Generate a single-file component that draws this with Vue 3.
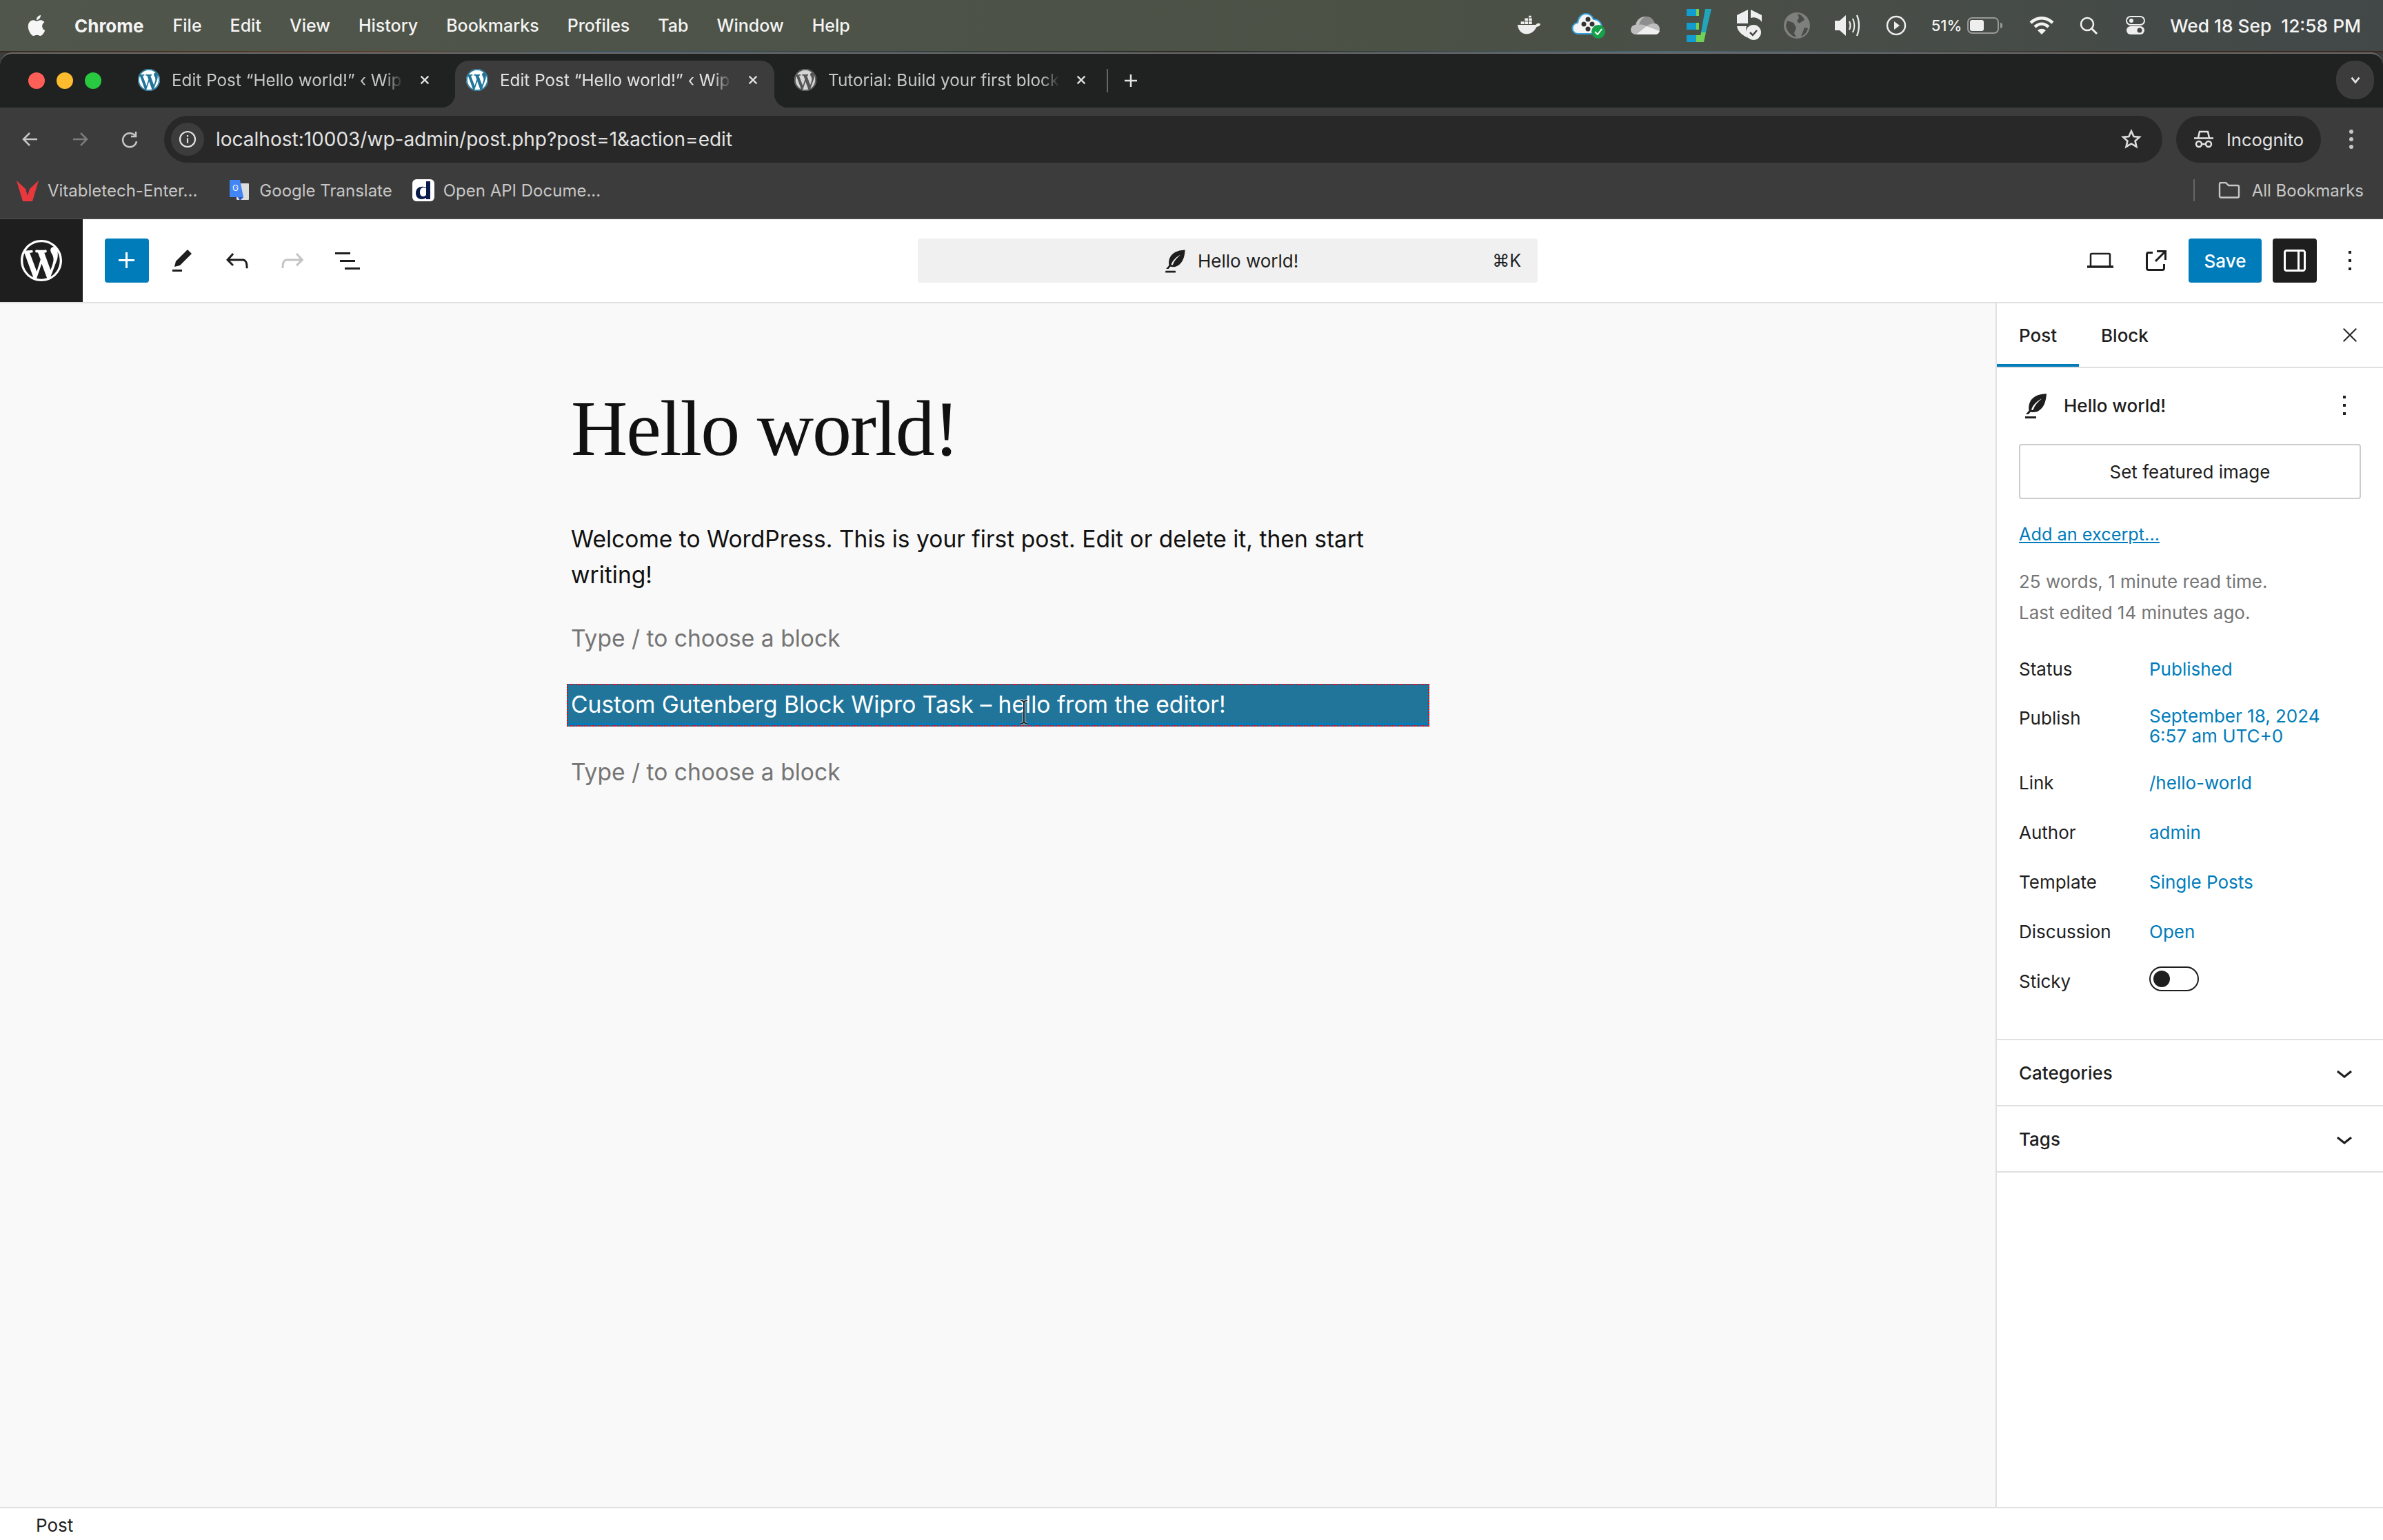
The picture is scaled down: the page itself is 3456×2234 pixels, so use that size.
<script setup>
const menus = ['File', 'Edit', 'View', 'History', 'Bookmarks', 'Profiles', 'Tab', 'Window', 'Help']
const tabs = [
  { title: 'Edit Post “Hello world!” ‹ Wip', active: false, tone: 'blue' },
  { title: 'Edit Post “Hello world!” ‹ Wip', active: true, tone: 'blue' },
  { title: 'Tutorial: Build your first block', active: false, tone: 'grey' }
]
const rows = [
  { label: 'Link', value: '/hello-world' },
  { label: 'Author', value: 'admin' },
  { label: 'Template', value: 'Single Posts' },
  { label: 'Discussion', value: 'Open' }
]
const wpLogo = 'M20 10c0-5.51-4.49-10-10-10C4.48 0 0 4.49 0 10c0 5.52 4.48 10 10 10 5.51 0 10-4.48 10-10zM7.78 15.37L4.37 6.22c.55-.02 1.17-.08 1.17-.08.5-.06.44-1.13-.06-1.11 0 0-1.45.11-2.37.11-.18 0-.37 0-.58-.01C4.12 2.69 6.87 1.11 10 1.11c2.33 0 4.45.87 6.05 2.34-.68-.11-1.65.39-1.65 1.58 0 .74.45 1.36.9 2.1.35.61.55 1.36.55 2.46 0 1.49-1.4 5-1.4 5l-3.03-8.37c.54-.02.82-.17.82-.17.5-.05.44-1.25-.06-1.22 0 0-1.44.12-2.38.12-.87 0-2.33-.12-2.33-.12-.5-.03-.56 1.2-.06 1.22l.92.08 1.26 3.41zM17.41 10c.24-.64.74-1.87.43-4.25.7 1.29 1.05 2.71 1.05 4.25 0 3.29-1.73 6.24-4.4 7.78.97-2.59 1.94-5.2 2.92-7.78zM6.1 18.09C3.12 16.65 1.11 13.53 1.11 10c0-1.3.23-2.48.72-3.59C3.25 10.3 4.67 14.2 6.1 18.09zm4.03-6.63l2.58 6.98c-.86.29-1.76.45-2.71.45-.79 0-1.57-.11-2.29-.33.81-2.38 1.62-4.74 2.42-7.1z'
const feather = 'M20 3.5c-6.5.3-10.6 2.6-12.2 6.6-.8 2-.8 4-.5 5.7L5 18.5h1.9l1.5-1.7c2 .5 4.300.3 6.200-1C18.300 13.300 19.700 8.800 20 3.500zM9 15.300c.9-3 3.500-6 7.500-8-3 2.400-5.200 5-6.300 8.200-.4 0-.8-.1-1.200-.2zM4.500 20h8v1.500h-8z'
</script>

<template>
  <div class="screen">
    <header class="menubar">
      <svg class="apple" viewBox="0 0 24 24"><path d="M12.152 6.896c-.948 0-2.415-1.078-3.96-1.04-2.04.027-3.91 1.183-4.961 3.014-2.117 3.675-.546 9.103 1.519 12.09 1.013 1.454 2.208 3.09 3.792 3.039 1.52-.065 2.09-.987 3.935-.987 1.831 0 2.35.987 3.96.948 1.637-.026 2.676-1.48 3.676-2.948 1.156-1.688 1.636-3.325 1.662-3.415-.039-.013-3.182-1.221-3.22-4.857-.026-3.04 2.48-4.494 2.597-4.559-1.429-2.09-3.623-2.324-4.39-2.376-2-.156-3.675 1.09-4.61 1.09zM15.53 3.83c.843-1.012 1.4-2.427 1.245-3.83-1.207.052-2.662.805-3.532 1.818-.78.896-1.454 2.338-1.273 3.714 1.338.104 2.715-.688 3.559-1.701" /></svg>
      <span class="app-name">Chrome</span>
      <span v-for="m in menus" :key="m" class="menu-item">{{ m }}</span>
      <div class="status-icons">
        <svg class="s-docker" width="38" height="30" viewBox="0 0 40 30"><path fill="#eee" d="M3 14h28c2-3 5-3 7-1-1 3-3 4-6 4-3 7-9 11-16 11C9 28 4 22 3 14z" /><path fill="#eee" d="M8 9h5v4H8zm6 0h5v4h-5zm6 0h5v4h-5zM14 4h5v4h-5zm6 0h5v4h-5zM20 0h4v3h-4z" /></svg>
        <svg class="s-cloud" width="50" height="40" viewBox="0 0 50 40"><path fill="#f4f4f4" stroke="#35a0dc" stroke-width="2" d="M10 32a8 8 0 0 1-1-16C10 8 15 3 21 3c5 0 9 3 11 8 7 0 12 5 12 12 0 5-4 9-8 9z" /><g fill="#333"><circle cx="24" cy="11" r="3.500" /><circle cx="18" cy="18" r="3.500" /><circle cx="30" cy="18" r="3.500" /><circle cx="24" cy="25" r="3.500" /></g><circle cx="39" cy="29" r="10" fill="#14a14a" /><path d="M34 29l4 4 6-8" fill="none" stroke="#fff" stroke-width="2" /></svg>
        <svg class="s-drive" width="42" height="28" viewBox="0 0 42 28"><path fill="#bdbdbd" d="M7 27a7 7 0 0 1 0-14c2-8 8-12 14-12s11 4 13 10c5 0 8 4 8 8s-3 8-7 8z" /><path fill="#8e8e8e" d="M12 13c2-8 7-12 11-12 6 0 10 4 12 10-6 0-9 2-12 4-3-2-7-3-11-2z" /><path fill="#efefef" d="M8 27l15-12 19 7c-1 3-3 5-7 5z" /></svg>
        <svg class="s-e" width="36" height="48" viewBox="0 0 36 48"><path fill="#129ccf" d="M0 0h14v10H0zM0 20h14v10H0zM0 38h14v10H0z" /><path fill="#78d24f" d="M14 0h4v10h-4zM14 20h4v10h-4zM14 38h8v10h-8z" /><path fill="#22a5b8" d="M27 0h9l-8 34h-7z" /><path fill="#6fd05c" d="M21 34h7l-3 14h-6z" /></svg>
        <svg class="s-shield" width="36" height="46" viewBox="0 0 36 46"><path fill="#efefef" d="M16 0v20H0V8zm4 0l16 8v10a14 14 0 0 0-16-6zM0 24h14c-2 6-1 12 2 17C8 37 1 32 0 24z" /><circle cx="24" cy="33" r="11" fill="#efefef" /><path d="M19 33l4 4 6-7" fill="none" stroke="#444" stroke-width="2.500" /></svg>
        <svg class="s-globe" width="38" height="38" viewBox="0 0 38 38"><circle cx="19" cy="19" r="19" fill="#7d807c" /><path fill="#4a4d47" d="M20 2c5 1 9 5 10 9l-8 5-3-4 3-4zM5 12l9 3 4 7-3 8 3 6C10 34 4 27 3 19zM30 22l5 1c-1 5-5 10-10 12z" /></svg>
        <svg class="s-sound" width="42" height="38" viewBox="0 0 42 38"><path fill="#eee" d="M1 12h7L17 4v30l-9-8H1z" /><path d="M22 13c2 4 2 8 0 12M27 9c3 6 3 14 0 20M33 4c4 9 4 21 0 30" fill="none" stroke="#eee" stroke-width="2.200" /></svg>
        <svg class="s-play" width="30" height="30" viewBox="0 0 30 30"><circle cx="15" cy="15" r="13" fill="none" stroke="#eee" stroke-width="2.500" /><path d="M12 9l8 6-8 6z" fill="#eee" /></svg>
        <span class="battery-pct">51%</span>
        <span class="battery"><span class="battery-fill"></span></span>
        <svg width="36" height="28" viewBox="0 0 36 28"><path d="M2 10c10-9 22-9 32 0M8 16c7-6 13-6 20 0" fill="none" stroke="#f2f2f2" stroke-width="4.500" /><path d="M12 21c4-3 8-3 12 0l-6 6z" fill="#f2f2f2" /></svg>
        <svg class="s-search" width="28" height="28" viewBox="0 0 28 28"><circle cx="12" cy="12" r="9" fill="none" stroke="#f2f2f2" stroke-width="2.500" /><path d="M18 18l8 8" stroke="#f2f2f2" stroke-width="3" /></svg>
        <svg width="28" height="28" viewBox="0 0 28 28"><rect x="1" y="1" width="26" height="12" rx="6" fill="none" stroke="#eee" stroke-width="2" /><circle cx="8" cy="7" r="3" fill="#eee" /><rect x="1" y="15" width="26" height="12" rx="6" fill="#eee" /><circle cx="20" cy="21" r="3.500" fill="#444" /></svg>
        <span class="clock">Wed 18 Sep&nbsp; 12:58 PM</span>
      </div>
    </header>
    <div class="wallpaper-strip"></div>

    <section class="browser">
      <div class="tabstrip">
        <div class="lights"><i class="red"></i><i class="amber"></i><i class="green"></i></div>
        <div v-for="(t, i) in tabs" :key="i" class="tab" :class="{ active: t.active }">
          <span class="favicon" :class="t.tone">
            <svg viewBox="0 0 20 20"><path :d="wpLogo" /></svg>
          </span>
          <span class="tab-title">{{ t.title }}</span>
          <svg class="tab-close" viewBox="0 0 20 20"><path d="M4 4l12 12M16 4L4 16" /></svg>
        </div>
        <span class="tab-sep"></span>
        <svg class="tab-new" viewBox="0 0 24 24"><path d="M12 3v18M3 12h18" /></svg>
        <span class="tab-list"><svg viewBox="0 0 20 20"><path d="M5 7l5 6 5-6" /></svg></span>
      </div>

      <div class="toolbar">
        <svg class="nav back" viewBox="0 0 28 28"><path d="M24 14H5M13 5l-9 9 9 9" /></svg>
        <svg class="nav fwd" viewBox="0 0 28 28"><path d="M4 14h19M15 5l9 9-9 9" /></svg>
        <svg class="nav reload" viewBox="0 0 28 28"><path d="M22 9a10 10 0 1 0 2 8M23 3v7h-7" /></svg>
        <div class="omnibox">
          <span class="site-info"><svg viewBox="0 0 28 28"><circle cx="14" cy="14" r="11" /><path d="M14 12.500v7M14 8v2.500" /></svg></span>
          <span class="url">localhost:10003/wp-admin/post.php?post=1&amp;action=edit</span>
          <svg class="star" viewBox="0 0 28 28"><path d="M14 3l3.300 7.300 7.700.8-5.800 5.200 1.700 7.700L14 20l-6.900 4 1.700-7.700L3 11.100l7.700-.8z" /></svg>
        </div>
        <div class="incognito">
          <svg viewBox="0 0 30 26"><path d="M1 11.500h28M7 11l2-9h12l2 9" fill="none" /><circle cx="8" cy="20" r="4" fill="none" /><circle cx="22" cy="20" r="4" fill="none" /><path d="M12 20h6" /></svg>
          <span>Incognito</span>
        </div>
        <svg class="chrome-kebab" viewBox="0 0 8 32"><circle cx="4" cy="5" r="3" /><circle cx="4" cy="16" r="3" /><circle cx="4" cy="27" r="3" /></svg>
      </div>

      <div class="bookmarks">
        <svg class="bm-icon" viewBox="0 0 32 32"><path fill="#e8383d" d="M0 2l13 12 3 10 3-10L32 2l-9 30h-14z" /></svg>
        <span class="bm first">Vitabletech-Enter...</span>
        <svg class="bm-icon translate" viewBox="0 0 32 32"><rect x="12" y="6" width="18" height="24" rx="1" fill="#ddd" /><path fill="#4285f4" d="M2 1h15l5 25H2z" /><path fill="#2a56c6" d="M14 26h8l-5 5z" /><text x="6" y="17" font-size="12" font-family="Inter, sans-serif" fill="#fff">G</text></svg>
        <span class="bm">Google Translate</span>
        <svg class="bm-icon" viewBox="0 0 32 32"><rect width="32" height="32" rx="6" fill="#fff" /><path fill="#0a1a4a" d="M20 3h6v26h-6v-2c-6 4-15 2-15-7 0-8 8-11 15-8zm0 10c-4-2-9-1-9 6s6 7 9 4z" /></svg>
        <span class="bm">Open API Docume...</span>
        <span class="bm-sep"></span>
        <svg class="bm-folder" viewBox="0 0 32 24"><path d="M2 20.500V3a2 2 0 0 1 2-2h7l4 4h13a2 2 0 0 1 2 2v13.500a2 2 0 0 1-2 2H4a2 2 0 0 1-2-2z" /></svg>
        <span class="bm all">All Bookmarks</span>
      </div>
    </section>

    <section class="wp-header">
      <div class="wp-logo"><svg viewBox="0 0 20 20"><path :d="wpLogo" /></svg></div>
      <button class="btn-add"><svg viewBox="0 0 24 24"><path d="M11 12.500V17.500H12.500V12.500H17.500V11H12.500V6H11V11H6V12.500H11Z" /></svg></button>
      <span class="tool"><svg viewBox="0 0 24 24"><path d="m19 7-3-3-8.500 8.500-1 4 4-1L19 7Zm-7 11.500H5V20h7v-1.500Z" /></svg></span>
      <span class="tool"><svg viewBox="0 0 24 24"><path d="M18.300 11.700c-.6-.6-1.400-.9-2.300-.9H6.700l2.900-3.300-1.100-1-4.500 5L8.500 16l1-1-2.700-2.700H16c.5 0 .9.200 1.300.5 1 1 1 3.400 1 4.500v.3h1.500v-.2c0-1.500 0-4.300-1.500-5.700z" /></svg></span>
      <span class="tool off"><svg viewBox="0 0 24 24"><path d="M15.600 6.500l-1.100 1 2.900 3.300H8c-.9 0-1.700.3-2.300.9-1.400 1.500-1.400 4.200-1.400 5.600v.2h1.500v-.3c0-1.100 0-3.500 1-4.500.3-.3.7-.5 1.300-.5h9.200L14.500 15l1.100 1.100 4.600-4.600-4.600-5z" /></svg></span>
      <span class="tool"><svg viewBox="0 0 24 24"><path d="M3 6h11v1.500H3V6Zm3.500 5.500h11V13h-11v-1.500ZM21 17H10v1.500h11V17Z" /></svg></span>

      <div class="command-bar">
        <svg viewBox="0 0 24 24"><path :d="feather" /></svg>
        <span class="command-title">Hello world!</span>
        <span class="command-key">⌘K</span>
      </div>

      <span class="tool preview"><svg class="laptop" viewBox="0 0 40 24"><path d="M6 20V3.500A1.500 1.500 0 0 1 7.500 2h25A1.500 1.500 0 0 1 34 3.500V20" /><path d="M1 21h38" class="laptop-base" /></svg></span>
      <span class="tool external"><svg viewBox="0 0 24 24"><path d="M19.500 4.500h-7V6h4.440l-5.970 5.970 1.060 1.060L18 7.060v4.440h1.500v-7Zm-13 1a2 2 0 0 0-2 2v10a2 2 0 0 0 2 2h10a2 2 0 0 0 2-2v-3H17v3a.5.5 0 0 1-.5.5h-10a.5.5 0 0 1-.5-.5v-10a.5.5 0 0 1 .5-.5h3V5.500h-3Z" /></svg></span>
      <button class="btn-save">Save</button>
      <button class="btn-panel"><svg viewBox="0 0 24 24"><path d="M18 4H6c-1.100 0-2 .9-2 2v12c0 1.100.9 2 2 2h12c1.100 0 2-.9 2-2V6c0-1.100-.9-2-2-2zm-4 14.500H6c-.3 0-.5-.2-.5-.5V6c0-.3.200-.5.500-.5h8v13zm4.500-.5c0 .3-.2.5-.5.500h-2.500v-13H18c.3 0 .5.200.5.500v12z" /></svg></button>
      <span class="tool kebab"><svg viewBox="0 0 24 24"><path d="M13 19h-2v-2h2v2zm0-6h-2v-2h2v2zm0-6h-2V5h2v2z" /></svg></span>
    </section>

    <section class="wp-body">
      <main class="canvas">
        <h1 class="post-title">Hello world!</h1>
        <p class="para">Welcome to WordPress. This is your first post. Edit or delete it, then start writing!</p>
        <p class="placeholder first">Type / to choose a block</p>
        <div class="custom-block">
          Custom Gutenberg Block Wipro Task – hello from the editor!
          <svg class="ibeam" viewBox="0 0 18 38"><path class="halo" d="M4 2c3 0 4 1 5 3 1-2 2-3 5-3M9 5v28M4 36c3 0 4-1 5-3 1 2 2 3 5 3" /><path d="M4 2c3 0 4 1 5 3 1-2 2-3 5-3M9 5v28M4 36c3 0 4-1 5-3 1 2 2 3 5 3" /></svg>
        </div>
        <p class="placeholder">Type / to choose a block</p>
      </main>

      <aside class="sidebar">
        <div class="side-tabs">
          <span class="side-tab current">Post</span>
          <span class="side-tab">Block</span>
          <svg class="side-close" viewBox="0 0 24 24"><path d="m13.060 12 6.470-6.470-1.060-1.060L12 10.940 5.530 4.470 4.470 5.530 10.940 12l-6.470 6.470 1.060 1.060L12 13.060l6.470 6.470 1.060-1.060L13.060 12Z" /></svg>
        </div>
        <div class="side-main">
          <div class="post-card">
            <svg class="post-icon" viewBox="0 0 24 24"><path :d="feather" /></svg>
            <span>Hello world!</span>
            <svg class="post-more" viewBox="0 0 24 24"><path d="M13 19h-2v-2h2v2zm0-6h-2v-2h2v2zm0-6h-2V5h2v2z" /></svg>
          </div>
          <button class="featured">Set featured image</button>
          <a class="excerpt">Add an excerpt...</a>
          <p class="meta">25 words, 1 minute read time.<br />Last edited 14 minutes ago.</p>
          <div class="rows">
            <div class="row"><span class="row-label">Status</span><a class="row-value">Published</a></div>
            <div class="row publish"><span class="row-label">Publish</span><a class="row-value">September 18, 2024<br />6:57 am UTC+0</a></div>
            <div v-for="r in rows" :key="r.label" class="row"><span class="row-label">{{ r.label }}</span><a class="row-value">{{ r.value }}</a></div>
            <div class="row"><span class="row-label">Sticky</span><span class="toggle"><i></i></span></div>
          </div>
        </div>
        <div class="panel first">
          <span>Categories</span>
          <svg viewBox="0 0 24 24"><path d="M17.500 11.600L12 16l-5.500-4.400.9-1.200L12 14l4.500-3.600 1 1.200z" /></svg>
        </div>
        <div class="panel">
          <span>Tags</span>
          <svg viewBox="0 0 24 24"><path d="M17.500 11.600L12 16l-5.500-4.400.9-1.200L12 14l4.500-3.600 1 1.200z" /></svg>
        </div>
      </aside>
    </section>

    <footer class="wp-status"><span>Post</span></footer>
  </div>
</template>

<style>
html, body { margin: 0; background: #fff; }
</style>

<style scoped>
.screen {
  width: 3456px;
  height: 2234px;
  display: flex;
  flex-direction: column;
  overflow: hidden;
  font-family: Inter, "Liberation Sans", sans-serif;
  color: #1e1e1e;
  background: #fff;
}

/* mac menu bar */
.menubar {
  height: 74px;
  flex: none;
  display: flex;
  align-items: center;
  padding: 0 32px 0 38px;
  background: linear-gradient(90deg, #50564b 0%, #4c5146 60%, #424848 100%);
  color: #f4f4f4;
  font-size: 25px;
  font-weight: 500;
}
.apple { width: 30px; height: 36px; fill: #f6f6f6; margin-right: 40px; }
.app-name { font-size: 26px; font-weight: 700; margin-right: 42px; }
.menu-item { margin-right: 41px; }
.status-icons { margin-left: auto; display: flex; align-items: center; gap: 36px; }
.s-docker { margin-right: 7px; }
.s-drive { margin-right: 3px; }
.s-e { margin-right: 1px; }
.s-shield { margin-right: -4px; }
.s-globe { margin-right: -1px; }
.s-sound { margin-right: -3px; }
.s-search { margin-right: 4px; }
.battery-pct { font-size: 22px; margin-right: -28px; }
.battery { width: 46px; height: 24px; margin-right: 8px; border: 2px solid #999; border-radius: 7px; padding: 2px; box-sizing: border-box; display: flex; position: relative; }
.battery::after { content: ""; position: absolute; right: -7px; top: 6px; width: 3px; height: 8px; border-radius: 0 3px 3px 0; background: #999; }
.battery-fill { width: 20px; background: #eee; border-radius: 3px; }
.clock { font-size: 26.300px; white-space: nowrap; }
.wallpaper-strip {
  height: 2px;
  flex: none;
  background: linear-gradient(90deg, #332a20, #5a3f2a 15%, #3f5866 25%, #2b2b26 50%, #4a6878 70%, #3a2a20 90%);
}

/* chrome */
.browser { flex: none; height: 242px; background: #3c3c3c; display: flex; flex-direction: column; }
.tabstrip {
  height: 80px;
  flex: none;
  box-sizing: border-box;
  padding-top: 10px;
  display: flex;
  background: #202222;
  border-top: 2px solid #6a6a6a;
  border-radius: 18px 18px 0 0;
}
.lights { width: 184px; flex: none; display: flex; gap: 17px; padding: 17px 0 0 41px; box-sizing: border-box; }
.lights i { width: 24px; height: 24px; border-radius: 50%; }
.red { background: #ff5f57; }
.amber { background: #febc2e; }
.green { background: #28c840; }
.tab {
  width: 463px;
  height: 68px;
  margin-right: 13px;
  flex: none;
  box-sizing: border-box;
  padding: 0 0 12px 18px;
  display: flex;
  align-items: center;
  gap: 19px;
  position: relative;
  color: #c7c7c7;
  font-size: 24.300px;
  border-radius: 20px 20px 0 0;
}
.tab.active { background: #3c3c3c; color: #e3e3e3; }
.tab.active::before,
.tab.active::after {
  content: "";
  position: absolute;
  bottom: 0;
  width: 20px;
  height: 20px;
}
.tab.active::before { left: -20px; background: radial-gradient(circle at 0 0, transparent 20px, #3c3c3c 20.5px); }
.tab.active::after { right: -20px; background: radial-gradient(circle at 100% 0, transparent 20px, #3c3c3c 20.5px); }
.favicon { width: 32px; height: 32px; margin: 0 -2px; border-radius: 50%; background: #fff; flex: none; display: flex; }
.favicon svg { width: 32px; height: 32px; }
.favicon.blue svg { fill: #21759b; }
.favicon.grey svg { fill: #555; }
.favicon.grey { background: #d5d5d5; }
.tab-title {
  width: 336px;
  flex: none;
  white-space: nowrap;
  -webkit-mask-image: linear-gradient(90deg, #000 92%, transparent);
  mask-image: linear-gradient(90deg, #000 92%, transparent);
}
.tab-close { width: 18px; height: 18px; margin-left: 3px; flex: none; fill: none; stroke: #e3e3e3; stroke-width: 2.500; }
.tab-sep { width: 2px; height: 34px; margin: 12px 0 0 -7px; background: #666; flex: none; }
.tab-new { width: 24px; height: 24px; margin: 17px 0 0 21px; flex: none; fill: none; stroke: #e3e3e3; stroke-width: 2.500; }
.tab-list {
  width: 55px;
  height: 56px;
  margin-left: auto;
  margin-right: 13px;
  border-radius: 26px;
  background: #3c3c3c;
  display: flex;
  align-items: center;
  justify-content: center;
  flex: none;
}
.tab-list svg { width: 22px; height: 22px; fill: none; stroke: #e3e3e3; stroke-width: 2.500; }

.toolbar { height: 92px; flex: none; box-sizing: border-box; padding: 12px 0 12px 30px; display: flex; align-items: center; }
.nav { width: 28px; height: 28px; flex: none; fill: none; stroke: #c7c7c7; stroke-width: 2.500; margin-right: 44px; }
.nav.fwd { stroke: #7c7c7c; }
.nav.reload { margin-right: 36px; }
.omnibox {
  width: 2898px;
  height: 68px;
  flex: none;
  box-sizing: border-box;
  padding: 0 30px 0 10px;
  display: flex;
  align-items: center;
  border-radius: 34px;
  background: #282828;
  color: #e3e3e3;
  font-size: 28px;
}
.site-info { width: 48px; height: 48px; border-radius: 50%; background: #3c3c3c; display: flex; align-items: center; justify-content: center; margin-right: 17px; }
.site-info svg { width: 28px; height: 28px; fill: none; stroke: #e3e3e3; stroke-width: 2.200; }
.star { width: 30px; height: 30px; margin-left: auto; fill: none; stroke: #dcdcdc; stroke-width: 2.500; }
.incognito {
  width: 210px;
  height: 68px;
  margin-left: 20px;
  flex: none;
  box-sizing: border-box;
  padding-left: 25px;
  display: flex;
  align-items: center;
  gap: 18px;
  border-radius: 34px;
  background: #282828;
  color: #e3e3e3;
  font-size: 25.500px;
}
.incognito svg { width: 30px; height: 26px; stroke: #e3e3e3; stroke-width: 2.500; }
.chrome-kebab { width: 8px; height: 32px; margin-left: 40px; flex: none; fill: #c7c7c7; }

.bookmarks { height: 70px; flex: none; box-sizing: border-box; padding: 0 28px 12px 24px; display: flex; align-items: center; color: #c7c7c7; font-size: 24px; border-bottom: 2px solid #474747; }
.bm-icon { width: 32px; height: 32px; flex: none; }
.bm { margin-left: 13px; margin-right: 29px; white-space: nowrap; }
.bm.first { margin-right: 45px; }
.bm-sep { width: 2px; height: 32px; margin-left: auto; background: #666; }
.bm-folder { width: 32px; height: 24px; margin-left: 34px; fill: none; stroke: #c7c7c7; stroke-width: 2.400; }
.bm.all { margin-right: 0; margin-left: 17px; }

/* wordpress header */
.wp-header {
  height: 122px;
  flex: none;
  box-sizing: border-box;
  display: flex;
  align-items: center;
  border-bottom: 2px solid #e0e0e0;
}
.wp-logo { width: 120px; height: 120px; background: #1e1e1e; display: flex; align-items: center; justify-content: center; flex: none; }
.wp-logo svg { width: 60px; height: 60px; fill: #fff; }
.btn-add {
  width: 64px;
  height: 64px;
  margin: 0 16px 0 32px;
  padding: 0;
  border: 0;
  border-radius: 4px;
  background: #007cba;
  display: flex;
  align-items: center;
  justify-content: center;
  flex: none;
}
.btn-add svg { width: 48px; height: 48px; fill: #fff; }
.tool { width: 64px; height: 64px; margin-right: 16px; flex: none; display: flex; align-items: center; justify-content: center; }
.tool svg { width: 48px; height: 48px; fill: #1e1e1e; }
.tool.off svg { fill: #c4c4c4; }
.tool svg.laptop { width: 40px; height: 24px; fill: none; stroke: #1e1e1e; stroke-width: 2.500; }
.laptop-base { stroke-width: 3.500; }
.command-bar {
  width: 899px;
  height: 64px;
  margin-left: 779px;
  flex: none;
  box-sizing: border-box;
  padding: 0 24px 0 351px;
  display: flex;
  align-items: center;
  border-radius: 4px;
  background: #f0f0f0;
  font-size: 26px;
}
.command-bar svg { width: 44px; height: 44px; margin-right: 11px; fill: #1e1e1e; }
.command-key { margin-left: auto; font-size: 25px; color: #1e1e1e; }
.tool.preview { margin-left: 784px; margin-right: 17px; }
.tool.external { margin-right: 15px; }
.btn-save {
  width: 106px;
  height: 64px;
  margin-right: 16px;
  padding: 0;
  border: 0;
  border-radius: 4px;
  background: #007cba;
  color: #fff;
  font: 500 26px Inter, sans-serif;
  flex: none;
}
.btn-panel {
  width: 64px;
  height: 64px;
  margin-right: 16px;
  padding: 0;
  border: 0;
  border-radius: 4px;
  background: #1e1e1e;
  display: flex;
  align-items: center;
  justify-content: center;
  flex: none;
}
.btn-panel svg { width: 48px; height: 48px; fill: #fff; }
.tool.kebab { margin-right: 0; }

/* editor */
.wp-body { flex: 1; min-height: 0; display: flex; }
.canvas { flex: 1; background: #f9f9f9; box-sizing: border-box; padding: 118px 0 0 828px; }
.post-title {
  margin: 0;
  height: 128px;
  font: 400 114px/128px "Liberation Serif", serif;
  letter-spacing: -2px;
  color: #111;
}
.para { width: 1200px; margin: 70px 0 0; font-size: 33.600px; line-height: 52px; color: #111; }
.placeholder { margin: 0; font-size: 33.600px; line-height: 52px; color: #757575; }
.placeholder.first { margin-top: 40px; }
.custom-block {
  width: 1251px;
  height: 62px;
  margin: 40px 0 40px -6px;
  box-sizing: border-box;
  padding-left: 4px;
  display: flex;
  align-items: center;
  position: relative;
  background: #21759b;
  border: 2px solid #007cba;
  border-bottom-width: 5px;
  outline: 2px dotted #f00;
  outline-offset: -2px;
  color: #fff;
  font-size: 33.600px;
  white-space: nowrap;
}
.ibeam { position: absolute; left: 652px; top: 20px; width: 18px; height: 38px; fill: none; stroke: #222; stroke-width: 2; }
.ibeam .halo { stroke: #fff; stroke-width: 4; opacity: .7; }

/* sidebar */
.sidebar { width: 562px; flex: none; box-sizing: border-box; border-left: 2px solid #e0e0e0; background: #fff; font-size: 26px; }
.side-tabs { height: 94px; box-sizing: border-box; border-bottom: 2px solid #e0e0e0; display: flex; align-items: center; position: relative; }
.side-tab { height: 92px; box-sizing: border-box; padding: 0 32px; display: flex; align-items: center; font-weight: 500; }
.side-tab.current { width: 119px; box-shadow: inset 0 -4px 0 #007cba; }
.side-close { width: 32px; height: 32px; margin-left: auto; margin-right: 32px; fill: #1e1e1e; }
.side-main { padding: 24px 32px 48px; }
.post-card { height: 60px; display: flex; align-items: center; font-weight: 500; }
.post-icon { width: 48px; height: 48px; margin-right: 17px; fill: #1e1e1e; }
.post-more { width: 48px; height: 48px; margin-left: auto; fill: #1e1e1e; }
.featured {
  width: 496px;
  height: 80px;
  margin-top: 26px;
  display: block;
  background: #fff;
  border: 2px solid #ccc;
  border-radius: 4px;
  color: #1e1e1e;
  font: 400 26px Inter, sans-serif;
}
.excerpt { display: block; margin-top: 31px; line-height: 40px; font-size: 25.300px; color: #007cba; text-decoration: underline; }
.meta { margin: 26px 0 0; line-height: 45px; color: #757575; }
.rows { margin-top: 23px; }
.row { height: 72px; display: flex; align-items: center; }
.row.publish { height: 93px; align-items: flex-start; line-height: 72px; }
.row.publish .row-value { margin-top: 18px; line-height: 29px; }
.row-label { width: 189px; flex: none; }
.row-value { color: #007cba; }
.toggle { width: 72px; height: 36px; margin-bottom: 6px; box-sizing: border-box; border: 2px solid #1e1e1e; border-radius: 18px; display: flex; align-items: center; padding-left: 4px; }
.toggle i { width: 24px; height: 24px; border-radius: 50%; background: #1e1e1e; }
.panel {
  height: 96px;
  box-sizing: border-box;
  padding: 0 32px;
  display: flex;
  align-items: center;
  justify-content: space-between;
  border-bottom: 2px solid #e0e0e0;
  font-weight: 500;
}
.panel.first { border-top: 2px solid #e0e0e0; height: 98px; }
.panel svg { width: 48px; height: 48px; fill: #1e1e1e; }

.wp-status {
  height: 48px;
  flex: none;
  box-sizing: border-box;
  padding: 2px 0 0 52px;
  display: flex;
  align-items: center;
  border-top: 2px solid #e0e0e0;
  background: #fff;
  font-size: 26px;
}
</style>
